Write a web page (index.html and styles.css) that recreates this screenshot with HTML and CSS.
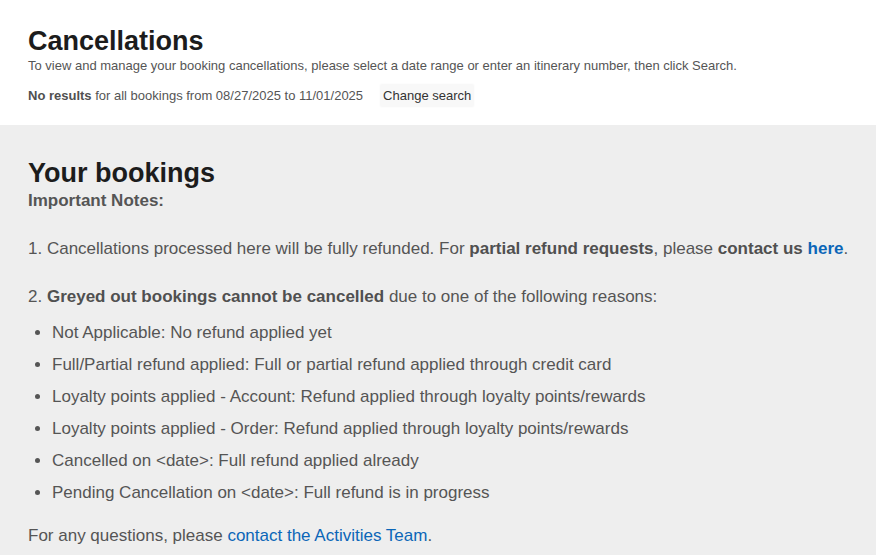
FILE: index.html
```html
<!DOCTYPE html>
<html lang="en">
<head>
<meta charset="utf-8">
<title>Cancellations</title>
<link rel="stylesheet" href="styles.css">
</head>
<body>
<header class="top">
  <h1 class="title">Cancellations</h1>
  <p class="subtitle">To view and manage your booking cancellations, please select a date range or enter an itinerary number, then click Search.</p>
  <div class="results-row">
    <span class="results"><strong>No results</strong> for all bookings from 08/27/2025 to 11/01/2025</span>
    <button class="change-btn" type="button">Change search</button>
  </div>
</header>
<main class="bookings">
  <h2 class="title">Your bookings</h2>
  <p class="notes-head">Important Notes:</p>
  <p class="note">1. Cancellations processed here will be fully refunded. For <strong>partial refund requests</strong>, please <strong>contact us</strong> <a class="link strong" href="#">here</a>.</p>
  <p class="note">2. <strong>Greyed out bookings cannot be cancelled</strong> due to one of the following reasons:</p>
  <ul class="reasons">
    <li>Not Applicable: No refund applied yet</li>
    <li>Full/Partial refund applied: Full or partial refund applied through credit card</li>
    <li>Loyalty points applied - Account: Refund applied through loyalty points/rewards</li>
    <li>Loyalty points applied - Order: Refund applied through loyalty points/rewards</li>
    <li>Cancelled on &lt;date&gt;: Full refund applied already</li>
    <li>Pending Cancellation on &lt;date&gt;: Full refund is in progress</li>
  </ul>
  <p class="note">For any questions, please <a class="link" href="#">contact the Activities Team</a>.</p>
</main>
</body>
</html>
```

FILE: styles.css
```css
html, body {
  margin: 0;
  padding: 0;
}
body {
  font-family: "Liberation Sans", Arial, sans-serif;
  color: #555555;
  background: #eeeeee;
  width: 876px;
  height: 555px;
  overflow: hidden;
}
.top {
  background: #ffffff;
  padding: 26px 28px 0 28px;
  height: 99px;
}
.title {
  margin: 0;
  font-size: 27px;
  line-height: 31px;
  font-weight: bold;
  color: #1c1c1c;
}
.subtitle {
  margin: 1px 0 0 0;
  font-size: 13px;
  line-height: 15px;
  color: #555555;
}
.results-row {
  display: flex;
  align-items: center;
  gap: 17px;
  margin-top: 11px;
  font-size: 13px;
  line-height: 15px;
  color: #555555;
}
.results strong {
  color: #505050;
}
.change-btn {
  font-family: "Liberation Sans", Arial, sans-serif;
  font-size: 13px;
  line-height: 15px;
  color: #333333;
  background: #f8f8f8;
  border: none;
  border-radius: 2px;
  padding: 4px 3px;
  box-shadow: 0 0 2px rgba(0,0,0,0.04);
}
.bookings {
  padding: 33px 8px 0 28px;
}
.notes-head {
  margin: 0;
  font-size: 17px;
  line-height: 24px;
  font-weight: bold;
  color: #555555;
}
.note {
  margin: 24px 0 0 0;
  font-size: 17px;
  line-height: 24px;
}
.note strong {
  color: #505050;
}
.link {
  color: #0b66b8;
  text-decoration: none;
}
.link.strong {
  font-weight: bold;
}
.reasons {
  margin: 12px 0 0 0;
  padding-left: 24px;
  font-size: 17px;
  line-height: 24px;
}
.reasons li {
  margin-bottom: 8px;
}
.reasons + .note {
  margin-top: 19px;
}
```
